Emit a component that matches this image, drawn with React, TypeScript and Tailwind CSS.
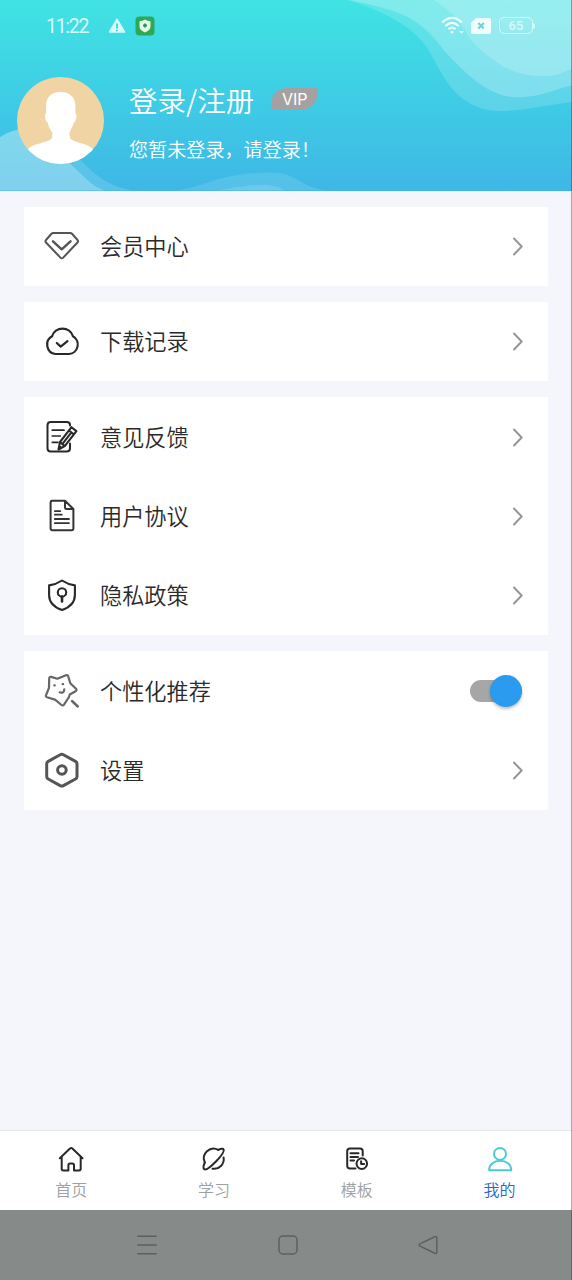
import type { ReactNode } from "react";

const font =
  "font-['Noto_Sans_CJK_SC','Noto_Sans',sans-serif]";

function Icon({ children, color = "#333", width = 2 }: { children: ReactNode; color?: string; width?: number }) {
  return (
    <svg
      className="h-10 w-10 shrink-0"
      viewBox="0 0 40 40"
      fill="none"
      stroke={color}
      strokeWidth={width}
      strokeLinecap="round"
      strokeLinejoin="round"
    >
      {children}
    </svg>
  );
}

const DiamondIcon = () => (
  <Icon color="#555">
    <path d="M11.500 7H28q1.400 0 2.300 1l5.200 6q1.100 1.300 0 2.500L21.200 31.600q-1.400 1.400-2.800 0L4 16.500q-1.100-1.200 0-2.500l5.200-6q.9-1 2.300-1Z" />
    <path d="m11 15.300 8.700 8 8.800-8" strokeWidth="2.500" />
  </Icon>
);

const CloudIcon = () => (
  <Icon color="#292929" width={2.200}>
    <path d="M10 15.300A11 11 0 0 1 31 15.300A9.500 9.500 0 0 1 27 33H13.500A9.500 9.500 0 0 1 10 15.300Z" />
    <path d="m14.800 22 3.900 3.600 6.800-5.500" />
  </Icon>
);

const FeedbackIcon = () => (
  <Icon color="#292929">
    <path d="M28 8.500V8q0-3-3.300-3H8.800Q5.500 5 5.500 8.300v22.900q0 3.300 3.300 3.300h15.900q3.300 0 3.300-3.300V26.500" />
    <path d="M10.300 13.200H22M10.300 19h8M10.300 25.300H16" strokeWidth="1.700" />
    <path d="m18 25 11.500-14.800 4.900 3.900-11.700 15-6.200 3.400 1.500-7.500Zm0 0 4.700 4.100M27 13.500l4.700 3.900M20.500 26.800l8.700-11.200M17.300 29.300l2 1.300" strokeWidth="2.100" />
  </Icon>
);

const DocIcon = () => (
  <Icon color="#333">
    <path d="M23 4.800H10q-1.400 0-1.400 1.400v26.600q0 1.400 1.400 1.400h20q1.400 0 1.400-1.400V13L23 4.800Zm0 0v6.800q0 1.400 1.400 1.400h7" strokeWidth="2" />
    <path d="M12.800 15.100h5.500M12.800 18.700h7M12.800 23H27M12.800 27.100H27" strokeWidth="1.800" />
  </Icon>
);

const ShieldIcon = () => (
  <Icon color="#292929" width={2.100}>
    <path d="M20 5.500c4 2.700 8 4.200 12.900 4.900V20c0 7.500-4.900 12.200-12.900 15C12 32.200 7.100 27.500 7.100 20v-9.600C12 9.700 16 8.200 20 5.500Z" />
    <circle cx="20" cy="17.400" r="4.200" />
    <path d="M20 21.500v5" strokeWidth="2.600" />
  </Icon>
);

const StarIcon = () => (
  <Icon color="#666" width={2.200}>
    <path d="M9.200 5.900 15.300 7.700 24 4.200q1.800-.6 2.200 1.100l2.100 6.900 5.700 5.600q1.300 1.500-.4 2.500L27.800 23.500 27 26l-5 7.600q-1.100 1.500-2.500.4L13 28.600l-8-2.400q-1.700-.6-.9-2.200l2.900-7.200.2-9.300q.1-2.200 2-1.600Z" />
    <path d="m30 30 5.800 5.500" strokeWidth="2.500" />
    <path d="M17.700 21.300q4.300 1.500 4.600-3M12.300 14.400h.5M20.600 13.200h.5" />
  </Icon>
);

const SettingsIcon = () => (
  <Icon color="#555" width={3}>
    <path d="M18.200 4.800q1.600-.9 3.200 0l12.100 6.600q1.500.8 1.500 2.500v12.600q0 1.700-1.500 2.500l-12.100 6.600q-1.600.9-3.200 0L6.200 29q-1.500-.8-1.500-2.500v-12.600q0-1.700 1.500-2.500Z" />
    <circle cx="19.900" cy="20" r="4.300" />
  </Icon>
);

const Chevron = () => (
  <svg className="h-5 w-3" viewBox="0 0 12 20" fill="none" stroke="#969696" strokeWidth="2" strokeLinecap="round" strokeLinejoin="round">
    <path d="m2 2.500 7.700 8-7.700 8" />
  </svg>
);

function Row({ icon, label, toggle }: { icon: ReactNode; label: string; toggle?: boolean }) {
  return (
    <div className="flex h-[79.400px] items-center pl-[18px] pr-6">
      {icon}
      <span className="-mt-[2px] ml-[18px] grow text-[22.200px] font-[350] leading-8 text-[#2a2a2a]">{label}</span>
      {toggle ? (
        <div className="mr-[2px] flex h-[22px] w-[52px] items-center justify-end rounded-full bg-[#a6a6a6]">
          <div className="h-8 w-8 shrink-0 rounded-full bg-[#2a9bef] shadow-[0_2px_3px_rgba(0,0,0,0.25)]" />
        </div>
      ) : (
        <Chevron />
      )}
    </div>
  );
}

const Card = ({ children }: { children: ReactNode }) => <section className="bg-white">{children}</section>;

function StatusBar() {
  return (
    <div className="flex h-[52px] items-center pl-[46px] pr-[37px] text-[#d5fbfb]">
      <span className="mt-[2px] w-[62px] font-['Roboto',sans-serif] text-[19.500px] leading-6 tracking-[-1.300px]">11:22</span>
      <svg className="h-[18px] w-[18px]" viewBox="0 0 18 18">
        <path d="M9 2.200 16.500 15H1.500Z" fill="currentColor" stroke="currentColor" strokeWidth="1.500" strokeLinejoin="round" />
        <path d="M9 6.500v5m0 1.200V14.300" stroke="#3ad1dc" strokeWidth="1.800" />
      </svg>
      <svg className="ml-[9px] h-5 w-5" viewBox="0 0 20 20">
        <rect x=".5" y=".5" width="19" height="19" rx="4" fill="#2da855" />
        <path d="M10 3.500c2 1.300 3.500 1.600 5.500 1.700v5c0 3-2 4.700-5.500 6.300-3.500-1.600-5.500-3.300-5.500-6.300v-5c2-.1 3.500-.4 5.500-1.700Z" fill="#e2fae6" />
        <path d="M10 7.500v4M8 9.500h4" stroke="#2d9060" strokeWidth="1.800" />
      </svg>
      <svg className="ml-auto h-5 w-6" viewBox="0 0 24 20" fill="none" stroke="#effdfd" strokeWidth="2.100">
        <path d="M1.200 6.500Q11 -2.800 20.800 6.500M4.400 10q6.600-6.100 13.200 0M7.500 13.200q3.500-3 7 0" />
        <circle cx="11" cy="16" r="1.600" fill="#effdfd" stroke="none" />
        <path d="m18 15 2.500 2.600 2.500-2.600Z" fill="#effdfd" stroke="none" />
      </svg>
      <svg className="-mt-px ml-[6px] h-4 w-5" viewBox="0 0 20 16">
        <path d="M5 0h13q2 0 2 2v12q0 2-2 2H2q-2 0-2-2V5Z" fill="#effdfd" />
        <path d="m7.300 5 5.500 5.500m0-5.500-5.500 5.500" stroke="#72cfd3" strokeWidth="2" />
      </svg>
      <div className="-mt-px ml-[8px] flex h-[17px] w-[34px] items-center justify-center rounded-[5px] border-[1.500px] border-[#d8fafa] font-['Roboto',sans-serif] text-[13px] font-medium leading-none">65</div>
      <div className="h-[6px] w-[2px] rounded-r bg-[#d8fafa]" />
    </div>
  );
}

function Header() {
  return (
    <header className="relative h-[190.500px] shrink-0 overflow-hidden bg-linear-to-b from-[#40e3e3] to-[#3eb7e6]">
      <svg className="absolute inset-0 h-full w-full" viewBox="0 0 572 190" preserveAspectRatio="none" fill="#fff">
        <path fillOpacity=".16" d="M347 0C376 8 402 21 417 36S431 57 446 80s34 30 53 30.700S545 105 572 101.700V0Z" />
        <path fillOpacity=".22" d="M350 0C389 8 410 15 425 29S440 47 453 60 490 97 516 97 550 90 572 85V0Z" />
        <path fillOpacity=".18" d="M434 0C464 19 462 32 479 48s38 28 60 28 22-4 33-7V0Z" />
        <path fillOpacity=".14" d="M0 137C30 116 58 135 80 159s36 27 52 31H0Z" />
        <path fillOpacity=".24" d="M0 137C30 116 50 145 72 165s20 20 33 25H0Z" />
        <path fillOpacity=".12" d="M177 190C212 184 218 173 267 172c31-1 30 14 60 18Z" />
        <path fillOpacity=".14" d="M217 190C235 186 275 180 284 190Z" />
      </svg>
      <div className="relative">
        <StatusBar />
        <div className="flex pl-[17px] pt-[25px]">
          <svg className="h-[87px] w-[87px]" viewBox="0 0 87 87">
            <defs>
              <clipPath id="avatar"><circle cx="43.500" cy="43.500" r="43.500" /></clipPath>
            </defs>
            <g clipPath="url(#avatar)">
              <path fill="#f0d4a4" d="M0 0h87v87H0z" />
              <path fill="#fff" d="M43.500 15C53 15 58 20 58.500 29L58.300 36C60.500 36 59.500 45 56.500 46 55.500 51 53 53 52.500 56L53 61C56 66 71 66 76 72V87H11V72C16 66 32 66 35 61L35.500 56C34 53 31.500 51 31 46 28 45 27 36 29.300 36L29 29C29.500 20 34 15 43.500 15Z" />
            </g>
          </svg>
          <div className="ml-[25px] pt-[5px] text-white">
            <div className="flex h-[38px] items-center">
              <h1 className="-mt-[2px] whitespace-nowrap text-[28.500px] font-[350] leading-[38px]">登录/注册</h1>
              <span className="ml-[17px] -mt-[5px] flex h-[22px] w-[47px] items-center justify-center rounded-tl-[16px] rounded-tr-[3px] rounded-br-[18px] bg-[#a5a1a3] font-['Inter',sans-serif] text-[16px] leading-none">VIP</span>
            </div>
            <p className="mt-[15px] whitespace-nowrap text-[19.100px] font-[350] leading-7">您暂未登录，请登录！</p>
          </div>
        </div>
      </div>
    </header>
  );
}

function TabIcon({ children, color = "#292929" }: { children: ReactNode; color?: string }) {
  return (
    <svg className="h-7 w-7" viewBox="0 0 28 28" fill="none" stroke={color} strokeWidth="2" strokeLinecap="round" strokeLinejoin="round">
      {children}
    </svg>
  );
}

function Tab({ icon, label, active }: { icon: ReactNode; label: string; active?: boolean }) {
  return (
    <button className="flex flex-1 flex-col items-center pt-[14px]">
      {icon}
      <span className={active ? "mt-[4px] text-[16px] font-[350] leading-6 text-[#2069c4]" : "mt-[4px] text-[16px] font-[350] leading-6 text-[#a0a0a0]"}>{label}</span>
    </button>
  );
}

export default function App() {
  return (
    <div className={`relative flex h-[1280px] w-[572px] flex-col overflow-hidden bg-[#f4f6fc] ${font}`}>
      <Header />
      <main className="flex grow flex-col gap-[15.800px] px-6 pt-4">
        <Card><Row icon={<DiamondIcon />} label="会员中心" /></Card>
        <Card><Row icon={<CloudIcon />} label="下载记录" /></Card>
        <Card>
          <Row icon={<FeedbackIcon />} label="意见反馈" />
          <Row icon={<DocIcon />} label="用户协议" />
          <Row icon={<ShieldIcon />} label="隐私政策" />
        </Card>
        <Card>
          <Row icon={<StarIcon />} label="个性化推荐" toggle />
          <Row icon={<SettingsIcon />} label="设置" />
        </Card>
      </main>
      <nav className="flex h-20 shrink-0 border-t border-[#e5e6e9] bg-white pr-px">
        <Tab
          label="首页"
          icon={
            <TabIcon>
              <path d="M2.800 13.200 13 3.500q1.200-1 2.400 0L25.500 13.200M4.700 12v11.800q0 1.700 1.700 1.700h5v-5.300q0-1.700 1.700-1.700h2.200q1.700 0 1.700 1.700v5.300h5q1.700 0 1.700-1.700V12" />
            </TabIcon>
          }
        />
        <Tab
          label="学习"
          icon={
            <TabIcon>
              <path d="M4.800 17.500A9.700 9.700 0 0 1 18.300 4.900M23.600 12.500A9.700 9.700 0 0 1 12.500 23.700" />
              <path d="M18.300 4.900c3-1.400 4.900-1.500 5.400-.3.700 2-2 5.900-7.500 11.700-5.500 5.700-10.200 9-12 7.900-1.300-1-.8-3.500.6-6.700" />
            </TabIcon>
          }
        />
        <Tab
          label="模板"
          icon={
            <TabIcon>
              <path d="M19.700 10.500V6.200q0-2.700-2.700-2.700H6.900Q4.200 3.500 4.200 6.200v14.600q0 2.700 2.700 2.700h5.600" />
              <path d="M7.500 8.300h8M7.500 11.900h7.500M7.500 15.500h3.500" />
              <circle cx="18.800" cy="18.600" r="5.300" />
              <path d="M18.100 16.200v2.900h3" />
            </TabIcon>
          }
        />
        <Tab
          active
          label="我的"
          icon={
            <TabIcon color="#4accd2">
              <circle cx="14" cy="8.900" r="6" />
              <path d="M3.200 25.300C3 19 8.200 15.800 14.100 15.800S25.400 19 25.200 25.300Z" />
            </TabIcon>
          }
        />
      </nav>
      <footer className="flex h-[70px] shrink-0 items-center justify-between bg-[#868b8a] pl-[136px] pr-[133px]">
        <svg className="h-[22px] w-[22px]" viewBox="0 0 22 22" stroke="#5c6160" strokeWidth="1.500">
          <path d="M1.300 2.200h19.400M1.300 11h19.400M1.300 19.800h19.400" />
        </svg>
        <svg className="h-[22px] w-[22px]" viewBox="0 0 22 22" fill="none" stroke="#5c6160" strokeWidth="1.500">
          <rect x="2" y="2" width="18" height="18" rx="4" />
        </svg>
        <svg className="h-[22px] w-[22px]" viewBox="0 0 22 22" fill="none" stroke="#5c6160" strokeWidth="1.500">
          <path d="M19.800 4v14q0 2.300-2 1.200L3 12.200q-1.800-1.200 0-2.400L17.800 2.800q2-1.100 2 1.200Z" />
        </svg>
      </footer>
      <div className="absolute inset-y-0 right-0 w-px bg-[#30343a]/40" />
    </div>
  );
}
